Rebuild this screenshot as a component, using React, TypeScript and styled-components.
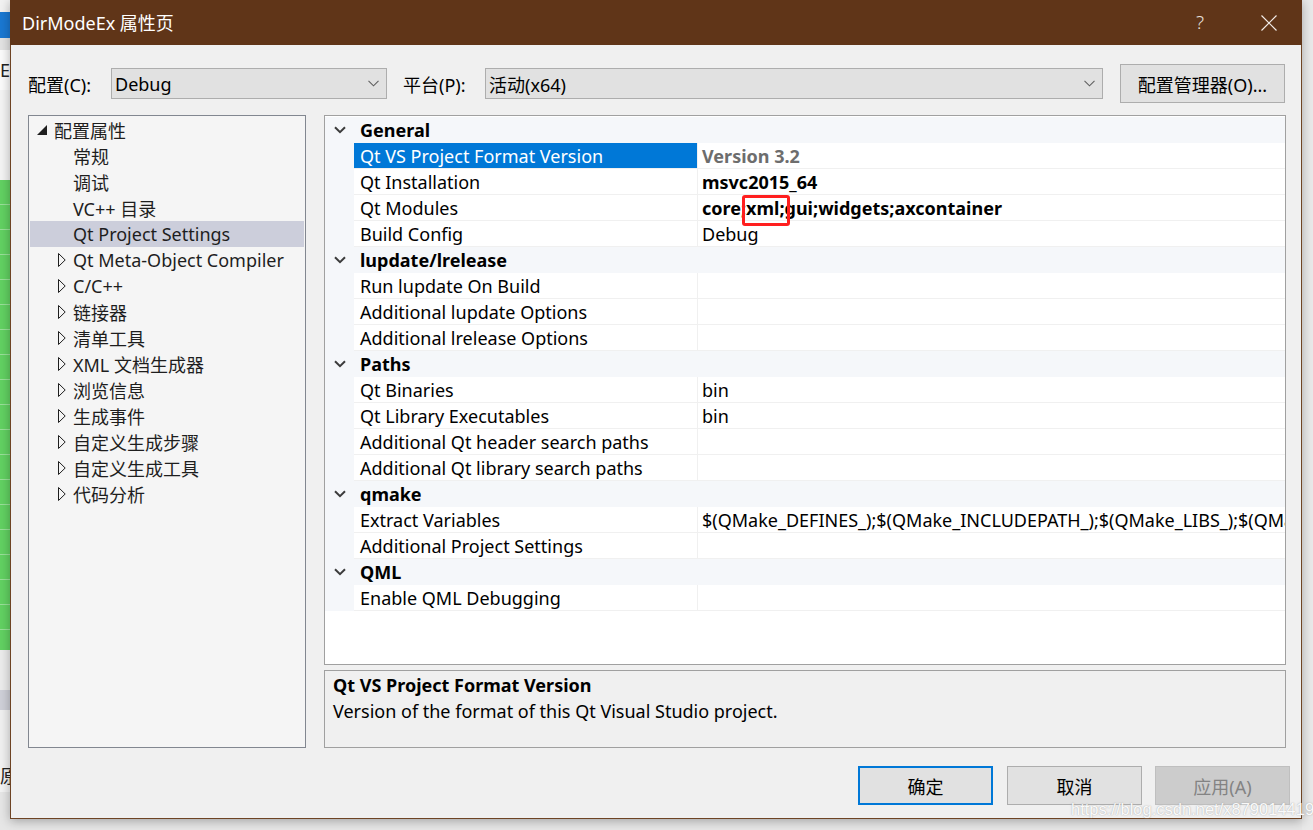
import React from "react";
import styled, { createGlobalStyle } from "styled-components";

const GlobalStyle = createGlobalStyle`
  html, body { margin: 0; padding: 0; }
  body {
    background: #e6e6e6;
    font-family: "Noto Sans", "Noto Sans CJK SC", sans-serif;
    color: #000;
  }
  * { box-sizing: border-box; }
`;

const Page = styled.div`
  position: relative;
  display: flex;
  width: 1313px;
  height: 830px;
  overflow: hidden;
  background: #e6e6e6;
`;

const BackLeft = styled.div`
  width: 10px;
  display: flex;
  flex-direction: column;
  overflow: hidden;
`;

const BackSeg = styled.div<{ $h: number; $bg: string; $lines?: boolean }>`
  height: ${(p) => p.$h}px;
  flex: none;
  background: ${(p) => p.$bg};
  ${(p) =>
    p.$lines
      ? `background-image: repeating-linear-gradient(to bottom, transparent 0 24px, rgba(255,255,255,0.35) 24px 25px);`
      : ""}
  font-size: 18px;
  line-height: ${(p) => p.$h}px;
  white-space: nowrap;
  color: #222;
`;

const BackRight = styled.div`
  flex: 1;
  background: #e9e9e9;
`;

const Dialog = styled.div`
  width: 1292px;
  height: 819px;
  flex: none;
  border: 1px solid #6e4424;
  border-top: none;
  background: #f0f0f0;
  display: flex;
  flex-direction: column;
  box-shadow: 0 2px 10px rgba(0, 0, 0, 0.3);
  position: relative;
  z-index: 1;
`;

const TitleBar = styled.div`
  height: 45px;
  flex: none;
  background: #603518;
  display: flex;
  align-items: center;
  padding-left: 12px;
  margin: 0 -1px;
  padding-right: 25px;
`;

const TitleText = styled.div`
  flex: 1;
  color: #ffffff;
  font-size: 18px;
  padding-bottom: 2px;
`;

const HelpMark = styled.div`
  color: #e6e0dc;
  font-size: 19px;
  font-weight: 300;
  margin-right: 57px;
  padding-bottom: 2px;
`;

const Body = styled.div`
  flex: 1;
  display: flex;
  flex-direction: column;
  padding: 19px 15px 0 17px;
`;

const TopRow = styled.div`
  display: flex;
  align-items: center;
  height: 39px;
`;

const FieldLabel = styled.div<{ $w: number; $indent?: number }>`
  width: ${(p) => p.$w}px;
  padding-left: ${(p) => p.$indent ?? 0}px;
  flex: none;
  font-size: 18px;
  white-space: nowrap;
`;

const Combo = styled.div<{ $w: number }>`
  width: ${(p) => p.$w}px;
  height: 31px;
  flex: none;
  background: #e1e1e1;
  border: 1px solid #adadad;
  display: flex;
  align-items: center;
  padding: 0 7px 0 3px;
  font-size: 18px;
`;

const ComboText = styled.span`
  flex: 1;
`;

const ManagerButton = styled.div`
  margin-left: 17px;
  width: 165px;
  height: 39px;
  flex: none;
  background: #e1e1e1;
  border: 1px solid #adadad;
  display: flex;
  align-items: center;
  justify-content: center;
  font-size: 18px;
`;

const Main = styled.div`
  display: flex;
  gap: 18px;
  margin-top: 12px;
  height: 633px;
`;

const Tree = styled.div`
  width: 278px;
  flex: none;
  border: 1px solid #828790;
  background: #f5f5f5;
  padding: 1px 1px 0;
`;

const TreeRow = styled.div<{ $level: number; $selected?: boolean }>`
  height: 26px;
  display: flex;
  align-items: center;
  padding-left: ${(p) => (p.$level === 0 ? 7 : 26)}px;
  background: ${(p) => (p.$selected ? "#cccedb" : "transparent")};
  font-size: 18px;
  white-space: nowrap;
  color: #1e1e1e;
`;

const Expander = styled.span<{ $level: number }>`
  width: 17px;
  flex: none;
  display: flex;
  align-items: center;
  padding-left: ${(p) => (p.$level === 0 ? 0 : 2)}px;
  padding-bottom: ${(p) => (p.$level === 0 ? 1 : 0)}px;
`;

const RightCol = styled.div`
  width: 962px;
  flex: none;
  display: flex;
  flex-direction: column;
  gap: 5px;
`;

const Grid = styled.div`
  position: relative;
  height: 550px;
  flex: none;
  border: 1px solid #a0a0a0;
  background: #ffffff;
  overflow: hidden;
  padding-top: 1px;
`;

const HeaderRow = styled.div`
  height: 26px;
  display: flex;
  align-items: center;
  background: #f5f7fa;
`;

const Gutter = styled.div`
  width: 29px;
  height: 100%;
  flex: none;
  display: flex;
  align-items: center;
  padding-left: 9px;
  background: #f5f7fa;
`;

const HeaderLabel = styled.div`
  padding-left: 6px;
  font-size: 18px;
  font-weight: 700;
  color: #000;
`;

const DataRow = styled.div`
  height: 26px;
  display: flex;
`;

const NameCell = styled.div<{ $selected?: boolean }>`
  width: 344px;
  flex: none;
  height: 100%;
  display: flex;
  align-items: center;
  padding-left: 6px;
  font-size: 18px;
  white-space: nowrap;
  border-bottom: 1px solid #f0f0f0;
  border-right: 1px solid #f0f0f0;
  background: ${(p) => (p.$selected ? "#0078d7" : "#ffffff")};
  color: ${(p) => (p.$selected ? "#ffffff" : "#000000")};
`;

const ValueCell = styled.div<{ $kind?: "bold" | "gray" | "normal" }>`
  flex: 1;
  min-width: 0;
  height: 100%;
  display: flex;
  align-items: center;
  padding-left: 4px;
  font-size: 18px;
  white-space: nowrap;
  overflow: hidden;
  border-bottom: 1px solid #f0f0f0;
  font-weight: ${(p) => (p.$kind === "bold" || p.$kind === "gray" ? 700 : 400)};
  color: ${(p) => (p.$kind === "gray" ? "#6d6d6d" : "#000000")};
`;

const Annotation = styled.div`
  position: absolute;
  left: 417px;
  top: 79px;
  width: 48px;
  height: 31px;
  border: 3px solid #ff1f1f;
  border-radius: 3px;
  pointer-events: none;
`;

const Desc = styled.div`
  height: 78px;
  flex: none;
  border: 1px solid #a0a0a0;
  background: #f0f0f0;
  padding: 1px 8px 0;
  font-size: 18px;
  line-height: 26px;
`;

const DescTitle = styled.div`
  font-weight: 700;
`;

const Footer = styled.div`
  display: flex;
  justify-content: flex-end;
  margin-top: 18px;
  margin-right: -4px;
  gap: 14px;
`;

const DlgButton = styled.div<{ $variant?: "default" | "disabled" | "normal" }>`
  width: 135px;
  height: 39px;
  display: flex;
  align-items: center;
  justify-content: center;
  font-size: 18px;
  background: ${(p) => (p.$variant === "disabled" ? "#cccccc" : "#e1e1e1")};
  border: ${(p) =>
    p.$variant === "default"
      ? "2px solid #0078d7"
      : p.$variant === "disabled"
      ? "1px solid #bfbfbf"
      : "1px solid #adadad"};
  color: ${(p) => (p.$variant === "disabled" ? "#838383" : "#000")};
  &:last-child {
    margin-left: -1px;
  }
`;

const Watermark = styled.div`
  position: absolute;
  left: 1071px;
  top: 800px;
  z-index: 2;
  font-family: "Liberation Sans", Arial, sans-serif;
  font-size: 16.5px;
  color: rgba(255, 255, 255, 0.95);
  text-shadow: 0 0 1px rgba(150, 150, 150, 0.7), 0 0 2px rgba(180, 180, 180, 0.5);
  white-space: nowrap;
  pointer-events: none;
`;

const ChevronDown = ({ color = "#606060" }: { color?: string }) => (
  <svg width="11" height="7" viewBox="0 0 11 7">
    <polyline points="0.5,0.8 5.5,5.8 10.5,0.8" fill="none" stroke={color} strokeWidth="1.1" />
  </svg>
);

const GroupChevron = () => (
  <svg width="12" height="8" viewBox="0 0 12 8">
    <polyline points="1,1.2 6,6.2 11,1.2" fill="none" stroke="#3c3c3c" strokeWidth="2" />
  </svg>
);

const ExpandedTri = () => (
  <svg width="10" height="10" viewBox="0 0 10 10">
    <path d="M10 0 L10 10 L0 10 Z" fill="#1e1e1e" />
  </svg>
);

const CollapsedTri = () => (
  <svg width="8" height="14" viewBox="0 0 8 14">
    <path d="M0.5 0.5 L7.2 7 L0.5 13.5 Z" fill="none" stroke="#1e1e1e" strokeWidth="1" />
  </svg>
);

const CloseIcon = () => (
  <svg width="16" height="16" viewBox="0 0 16 16">
    <path d="M0.5 0.5 L15.5 15.5 M15.5 0.5 L0.5 15.5" stroke="#f2ece8" strokeWidth="1.2" />
  </svg>
);

type TreeItem = { label: string; level: number; state: "open" | "closed" | "leaf"; selected?: boolean };

const treeItems: TreeItem[] = [
  { label: "配置属性", level: 0, state: "open" },
  { label: "常规", level: 1, state: "leaf" },
  { label: "调试", level: 1, state: "leaf" },
  { label: "VC++ 目录", level: 1, state: "leaf" },
  { label: "Qt Project Settings", level: 1, state: "leaf", selected: true },
  { label: "Qt Meta-Object Compiler", level: 1, state: "closed" },
  { label: "C/C++", level: 1, state: "closed" },
  { label: "链接器", level: 1, state: "closed" },
  { label: "清单工具", level: 1, state: "closed" },
  { label: "XML 文档生成器", level: 1, state: "closed" },
  { label: "浏览信息", level: 1, state: "closed" },
  { label: "生成事件", level: 1, state: "closed" },
  { label: "自定义生成步骤", level: 1, state: "closed" },
  { label: "自定义生成工具", level: 1, state: "closed" },
  { label: "代码分析", level: 1, state: "closed" },
];

type Prop = { name: string; value?: string; kind?: "bold" | "gray" | "normal"; selected?: boolean };
type Group = { title: string; props: Prop[] };

const groups: Group[] = [
  {
    title: "General",
    props: [
      { name: "Qt VS Project Format Version", value: "Version 3.2", kind: "gray", selected: true },
      { name: "Qt Installation", value: "msvc2015_64", kind: "bold" },
      { name: "Qt Modules", value: "core;xml;gui;widgets;axcontainer", kind: "bold" },
      { name: "Build Config", value: "Debug" },
    ],
  },
  {
    title: "lupdate/lrelease",
    props: [
      { name: "Run lupdate On Build" },
      { name: "Additional lupdate Options" },
      { name: "Additional lrelease Options" },
    ],
  },
  {
    title: "Paths",
    props: [
      { name: "Qt Binaries", value: "bin" },
      { name: "Qt Library Executables", value: "bin" },
      { name: "Additional Qt header search paths" },
      { name: "Additional Qt library search paths" },
    ],
  },
  {
    title: "qmake",
    props: [
      {
        name: "Extract Variables",
        value: "$(QMake_DEFINES_);$(QMake_INCLUDEPATH_);$(QMake_LIBS_);$(QMake_CFLAGS_)",
      },
      { name: "Additional Project Settings" },
    ],
  },
  {
    title: "QML",
    props: [{ name: "Enable QML Debugging" }],
  },
];

export default function App() {
  return (
    <>
      <GlobalStyle />
      <Page>
        <BackLeft>
          <BackSeg $h={12} $bg="#f2f2f2" />
          <BackSeg $h={26} $bg="#1a78d2" />
          <BackSeg $h={12} $bg="#e3e3e3" />
          <BackSeg $h={40} $bg="#fbfbfb">E</BackSeg>
          <BackSeg $h={90} $bg="#f4f4f4" />
          <BackSeg $h={470} $bg="#62d162" $lines />
          <BackSeg $h={40} $bg="#ececec" />
          <BackSeg $h={20} $bg="#cfd0d8" />
          <BackSeg $h={50} $bg="#f0f0f0" />
          <BackSeg $h={32} $bg="#f3f3f3">原</BackSeg>
          <BackSeg $h={30} $bg="#e6e6e6" />
        </BackLeft>
        <Dialog>
          <TitleBar>
            <TitleText>DirModeEx 属性页</TitleText>
            <HelpMark>?</HelpMark>
            <CloseIcon />
          </TitleBar>
          <Body>
            <TopRow>
              <FieldLabel $w={83}>配置(C):</FieldLabel>
              <Combo $w={276}>
                <ComboText>Debug</ComboText>
                <ChevronDown />
              </Combo>
              <FieldLabel $w={98} $indent={16}>平台(P):</FieldLabel>
              <Combo $w={618}>
                <ComboText>活动(x64)</ComboText>
                <ChevronDown />
              </Combo>
              <ManagerButton>配置管理器(O)...</ManagerButton>
            </TopRow>
            <Main>
              <Tree>
                {treeItems.map((t) => (
                  <TreeRow key={t.label} $level={t.level} $selected={t.selected}>
                    <Expander $level={t.level}>
                      {t.state === "open" && <ExpandedTri />}
                      {t.state === "closed" && <CollapsedTri />}
                    </Expander>
                    {t.label}
                  </TreeRow>
                ))}
              </Tree>
              <RightCol>
                <Grid>
                  {groups.map((g) => (
                    <React.Fragment key={g.title}>
                      <HeaderRow>
                        <Gutter>
                          <GroupChevron />
                        </Gutter>
                        <HeaderLabel>{g.title}</HeaderLabel>
                      </HeaderRow>
                      {g.props.map((p) => (
                        <DataRow key={p.name}>
                          <Gutter />
                          <NameCell $selected={p.selected}>{p.name}</NameCell>
                          <ValueCell $kind={p.kind}>{p.value}</ValueCell>
                        </DataRow>
                      ))}
                    </React.Fragment>
                  ))}
                  <Annotation />
                </Grid>
                <Desc>
                  <DescTitle>Qt VS Project Format Version</DescTitle>
                  <div>Version of the format of this Qt Visual Studio project.</div>
                </Desc>
              </RightCol>
            </Main>
            <Footer>
              <DlgButton $variant="default">确定</DlgButton>
              <DlgButton $variant="normal">取消</DlgButton>
              <DlgButton $variant="disabled">应用(A)</DlgButton>
            </Footer>
          </Body>
        </Dialog>
        <BackRight />
        <Watermark>https://blog.csdn.net/x879014419</Watermark>
      </Page>
    </>
  );
}
